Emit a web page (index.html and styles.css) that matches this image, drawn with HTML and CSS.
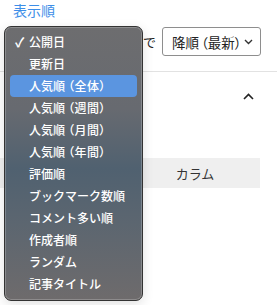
FILE: index.html
```html
<!DOCTYPE html>
<html lang="ja">
<head>
    <meta charset="UTF-8">
    <meta name="viewport" content="width=device-width, initial-scale=1.0">
    <title>表示順</title>
    <link rel="stylesheet" href="styles.css">
</head>
<body>
    <a class="sort-title" href="#">表示順</a>

    <div class="sort-row">
        <div class="select select-field">公開日</div>
        <span class="sort-de">で</span>
        <div class="select select-order">
            <span class="select-text">降順<span class="paren">（最新）</span></span>
            <svg class="chev" width="9" height="6" viewBox="0 0 9 6"><path d="M1 1l3.5 3.5L8 1" fill="none" stroke="#333" stroke-width="1.4"/></svg>
        </div>
    </div>

    <div class="section">
        <div class="section-head">
            <svg class="chev-up" width="11" height="7" viewBox="0 0 11 7"><path d="M1 6l4.5-4.5L10 6" fill="none" stroke="#222" stroke-width="1.6"/></svg>
        </div>
        <div class="tabs">
            <div class="tab">記事</div>
            <div class="tab">カラム</div>
        </div>
    </div>

    <!-- open native select popup -->
    <ul class="menu">
        <li class="checked"><span class="check">✓</span>公開日</li>
        <li>更新日</li>
        <li class="active">人気順<span class="paren">（全体）</span></li>
        <li>人気順<span class="paren">（週間）</span></li>
        <li>人気順<span class="paren">（月間）</span></li>
        <li>人気順<span class="paren">（年間）</span></li>
        <li>評価順</li>
        <li>ブックマーク数順</li>
        <li>コメント多い順</li>
        <li>作成者順</li>
        <li>ランダム</li>
        <li>記事タイトル</li>
    </ul>
</body>
</html>
```

FILE: styles.css
```css
body {
    font-family: "Noto Sans CJK JP", "Noto Sans", sans-serif;
    background-color: #fff;
    color: #333;
    margin: 0;
    padding: 0;
    position: relative;
    width: 277px;
    height: 305px;
    overflow: hidden;
}
.sort-title {
    display: block;
    color: #3d8ee8;
    text-decoration: none;
    font-size: 14px;
    line-height: 20px;
    padding: 0 0 0 13px;
}
.sort-row {
    display: flex;
    align-items: center;
    padding: 7px 0 0 12px;
    height: 29px;
}
.select {
    box-sizing: border-box;
    height: 29px;
    border: 1px solid #8e8e8e;
    border-radius: 3px;
    background-color: #fff;
    font-size: 13px;
    display: flex;
    align-items: center;
    padding: 0 8px;
    color: #222;
    white-space: nowrap;
}
.select-field {
    width: 126px;
}
.sort-de {
    font-size: 13px;
    margin: 0 6px 0 5px;
    color: #222;
}
.select-order {
    width: 99px;
    padding: 0 7px 0 9px;
    justify-content: space-between;
}
.select-text {
    font-size: 13.5px;
}
.select-text .paren {
    margin-left: 2px;
    letter-spacing: 0;
}
.chev {
    flex-shrink: 0;
    margin-top: 1px;
}
.section {
    border-top: 1px solid #e2e2e2;
    margin-top: 15px;
}
.section-head {
    height: 40px;
    display: flex;
    justify-content: flex-end;
    align-items: center;
    padding-right: 23px;
    padding-top: 4px;
}
.chev-up {
    display: block;
}
.tabs {
    display: flex;
    margin: 42px 17px 0 0;
    height: 30px;
    background-color: #efefef;
}
.tab {
    flex: 1;
    font-size: 13px;
    color: #333;
    display: flex;
    align-items: center;
    justify-content: center;
}
.menu {
    position: absolute;
    left: 4px;
    top: 26px;
    width: 139px;
    height: 275px;
    box-sizing: border-box;
    margin: 0;
    padding: 4px 0;
    list-style-type: none;
    border: 1px solid #333;
    border-radius: 7px;
    background: linear-gradient(180deg, #6d6d6f 0%, #676a70 30%, #506170 52%, #5c6670 72%, #6e6b6c 100%);
    box-shadow: inset 0 0 0 1px rgba(255, 255, 255, 0.22), 0 3px 12px rgba(0, 0, 0, 0.12);
}
.menu li {
    position: relative;
    height: 22px;
    line-height: 22px;
    margin: 0 5px;
    padding-left: 19px;
    font-size: 12px;
    font-weight: 500;
    color: #fff;
    border-radius: 4px;
    white-space: nowrap;
}
.menu li.active {
    background-color: #5b95e0;
}
.paren {
    font-feature-settings: "palt";
    margin-left: 3px;
    letter-spacing: 0.5px;
}
.check {
    position: absolute;
    left: 5px;
    top: 0;
    font-size: 13px;
    font-weight: 700;
}
```
